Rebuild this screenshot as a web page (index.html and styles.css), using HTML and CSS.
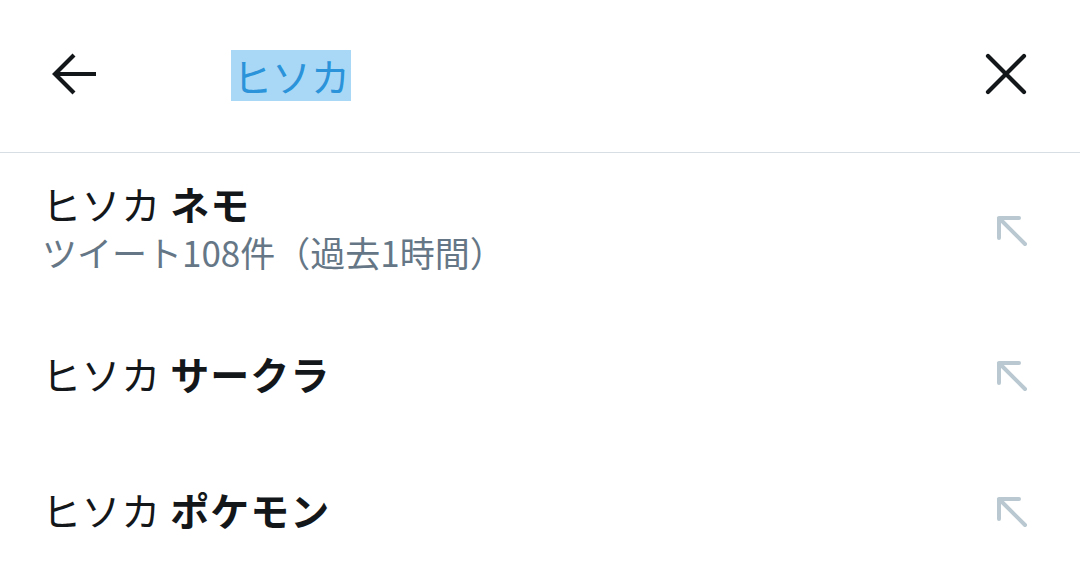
FILE: index.html
```html
<!DOCTYPE html>
<html lang="ja">
<head>
<meta charset="utf-8">
<link rel="stylesheet" href="styles.css">
</head>
<body>
<header class="top">
  <button class="icon-btn back" aria-label="戻る">
    <svg width="46" height="46" viewBox="0 0 46 46"><path d="M44 23H5M22 4L3 23l19 19" fill="none" stroke="#14171a" stroke-width="4.2" stroke-linecap="butt" stroke-linejoin="miter"/></svg>
  </button>
  <div class="query"><span class="sel">ヒソカ</span></div>
  <button class="icon-btn close" aria-label="クリア">
    <svg width="42" height="42" viewBox="0 0 42 42"><path d="M3 3L39 39M39 3L3 39" fill="none" stroke="#14171a" stroke-width="4.2" stroke-linecap="round"/></svg>
  </button>
</header>
<ul class="list">
  <li class="item first">
    <div class="texts">
      <div class="title">ヒソカ <b>ネモ</b></div>
      <div class="sub">ツイート108件（過去1時間）</div>
    </div>
    <svg class="fill" width="34" height="34" viewBox="0 0 34 34"><path d="M5 5H25M5 5V25M5 5L31 31" fill="none" stroke="#b9c8d1" stroke-width="4" stroke-linecap="round"/></svg>
  </li>
  <li class="item">
    <div class="texts"><div class="title">ヒソカ <b>サークラ</b></div></div>
    <svg class="fill" width="34" height="34" viewBox="0 0 34 34"><path d="M5 5H25M5 5V25M5 5L31 31" fill="none" stroke="#b9c8d1" stroke-width="4" stroke-linecap="round"/></svg>
  </li>
  <li class="item">
    <div class="texts"><div class="title">ヒソカ <b>ポケモン</b></div></div>
    <svg class="fill" width="34" height="34" viewBox="0 0 34 34"><path d="M5 5H25M5 5V25M5 5L31 31" fill="none" stroke="#b9c8d1" stroke-width="4" stroke-linecap="round"/></svg>
  </li>
</ul>
</body>
</html>
```
FILE: styles.css
```css
* { box-sizing: border-box; }
html, body { margin: 0; padding: 0; background: #fff; }
body {
  width: 1080px;
  height: 586px;
  overflow: hidden;
  font-family: "Noto Sans CJK JP", "Noto Sans", sans-serif;
  color: #14171a;
}
.top {
  height: 153px;
  border-bottom: 1px solid #d8dfe4;
  display: flex;
  align-items: center;
  padding: 0 53px 0 52px;
}
.icon-btn {
  border: 0;
  background: none;
  padding: 0;
  display: flex;
  align-items: center;
  justify-content: center;
}
.back { width: 46px; height: 46px; margin-top: -5px; }
.query {
  flex: 1;
  padding-left: 133px;
  margin-top: -2px;
}
.sel {
  display: inline-block;
  background: #a9d8f7;
  color: #2a93d9;
  font-size: 39px;
  line-height: 51px;
  height: 51px;
  padding: 0 1px 0 2px;
}
.close { width: 42px; height: 42px; margin-top: -5px; }
.list { list-style: none; margin: 0; padding: 0; }
.item {
  display: flex;
  align-items: center;
  padding: 0 52px 0 42px;
  height: 136px;
}
.item.first { height: 154px; }
.texts { flex: 1; margin-top: -4px; }
.title {
  font-size: 39px;
  line-height: 48px;
  letter-spacing: 0.6px;
}
.title b { font-weight: 700; letter-spacing: 1px; }
.sub {
  font-size: 35px;
  line-height: 50px;
  color: #657786;
}
.fill { flex: none; }
```
